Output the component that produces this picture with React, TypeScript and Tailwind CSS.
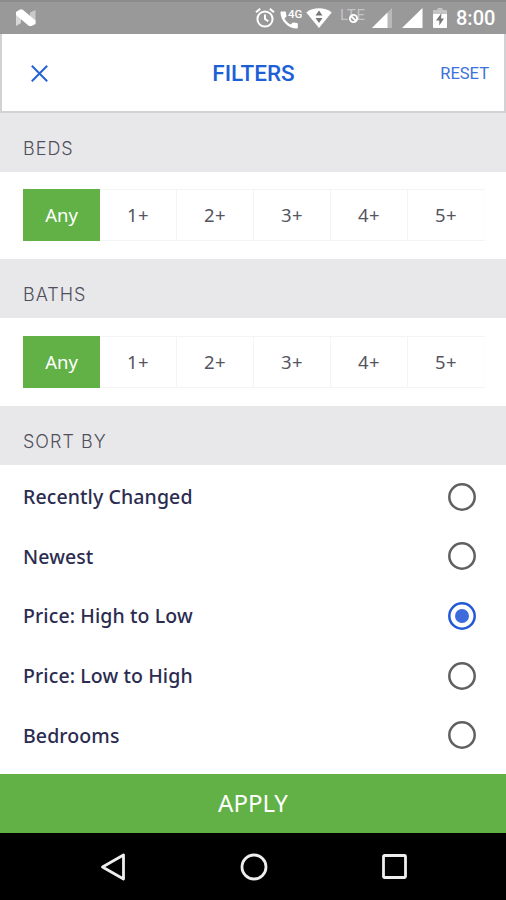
import { useState } from "react";

const counts = ["Any", "1+", "2+", "3+", "4+", "5+"];

const sortOptions = [
  "Recently Changed",
  "Newest",
  "Price: High to Low",
  "Price: Low to High",
  "Bedrooms",
];

function StatusBar() {
  return (
    <div className="flex h-[34px] items-center border-t-2 border-[#8b8b8b] bg-[#999999] pl-[15px] pr-[11px] text-white">
      <svg width="22" height="18" viewBox="0 0 22 18">
        <path d="M1 4 6 1v13L1 17z" fill="#d6d6d6" />
        <path d="M15 3.500 20.500 1v13L15 16z" fill="#c9c9c9" />
        <path d="M1 3 5 .500h2.500L20.500 11.500V15L16.500 17H14L1 6z" fill="#fff" />
      </svg>

      <svg className="ml-auto" width="20" height="22" viewBox="0 0 20 22" fill="none" stroke="#fff" strokeWidth="2">
        <circle cx="10" cy="12" r="7.600" />
        <path d="M10 7.500V12l3.300 2.300M1 5.300l4.200-3.600M19 5.300l-4.200-3.600" />
      </svg>

      <svg className="ml-[5px]" width="22" height="26" viewBox="0 -2 22 26">
        <path
          d="M1.500 4.500h3.500c.6 0 1 .4 1 1 0 1.200.2 2.300.5 3.300.1.400 0 .8-.3 1L4.500 11.500c1.500 2.800 3.500 4.700 6.300 6.100l1.800-1.800c.3-.3.700-.4 1-.2 1 .3 2.100.5 3.200.5.600 0 1 .4 1 1v3.400c0 .6-.4 1-1 1C8.300 21.500.5 13.800.5 5.500c0-.6.400-1 1-1z"
          fill="#fff"
        />
        <text x="8" y="10.500" fill="#fff" fontSize="11.500" fontWeight="500" fontFamily="Roboto, sans-serif">
          4G
        </text>
      </svg>

      <svg className="ml-[4px]" width="26" height="20" viewBox="0 0 26 20">
        <path d="M13 20 .3 4.400C3.700 1.700 8.200.3 13 .3s9.300 1.400 12.700 4.100z" fill="#fff" />
        <path d="m13 2.500 3.500 5H9.500zM13 15l3.500-5H9.500z" fill="#777" />
      </svg>

      <svg className="ml-[8px]" width="27" height="26" viewBox="0 -2 27 26">
        <text x="0" y="13" fill="#c4c4c4" fontSize="15" fontFamily="Roboto, sans-serif" textLength="25">
          LTE
        </text>
        <circle cx="13.500" cy="11.500" r="3.600" fill="#999" stroke="#fff" strokeWidth="1.900" />
        <path d="m11 9 5 5" stroke="#fff" strokeWidth="1.800" />
      </svg>

      <svg className="ml-[5px]" width="21" height="20" viewBox="0 0 21 20">
        <path d="M0 20 20 0v20z" fill="#b9b9b9" />
        <path d="M0 20 15.500 4.500V20z" fill="#fff" />
      </svg>

      <svg className="ml-[9px]" width="21" height="20" viewBox="0 0 21 20">
        <path d="M0 20 20.500 0v20z" fill="#fff" />
      </svg>

      <svg className="ml-[10px]" width="14" height="20" viewBox="0 0 14 20">
        <path d="M4.500 0h5v2H13c.6 0 1 .4 1 1v4H0V3c0-.6.4-1 1-1h3.500z" fill="#c4c4c4" />
        <path d="M0 6h14v13c0 .6-.4 1-1 1H1c-.6 0-1-.4-1-1z" fill="#fff" />
        <path d="M8.500 5 3 12.500h3.300V17.500L11 10.500H8z" fill="#777" />
      </svg>

      <span className="ml-[9px] w-[39px] whitespace-nowrap font-[Roboto,sans-serif] text-[20px] font-medium leading-none">
        8:00
      </span>
    </div>
  );
}

type SectionTitleProps = {
  title: string;
};

function SectionTitle({ title }: SectionTitleProps) {
  return (
    <h2 className="flex h-[59px] items-center bg-[#e8e8ea] pl-[23px] pt-[11px] font-[Inter,sans-serif] text-[18px] font-light tracking-[1px] text-[#50505c]">
      {title}
    </h2>
  );
}

type CountPickerProps = {
  value: string;
  onChange: (value: string) => void;
  className?: string;
};

function CountPicker({ value, onChange, className = "h-[88px]" }: CountPickerProps) {
  return (
    <div className={`flex items-center pl-[23px] pr-[21px] ${className}`}>
      <div className="grid h-[52px] w-full grid-cols-6">
        {counts.map((count) => (
          <button
            key={count}
            type="button"
            onClick={() => onChange(count)}
            className={
              value === count
                ? "bg-[#61b146] text-[18.5px] text-white"
                : "border-y border-r border-[#f4f4f4] text-[18.5px] tracking-[0.4px] text-[#55555f] last:border-r-[#fcfcfc]"
            }
          >
            {count}
          </button>
        ))}
      </div>
    </div>
  );
}

export default function App() {
  const [beds, setBeds] = useState("Any");
  const [baths, setBaths] = useState("Any");
  const [sort, setSort] = useState("Price: High to Low");

  return (
    <div className="flex h-[900px] w-[506px] flex-col overflow-hidden bg-white font-['Noto_Sans',sans-serif]">
      <StatusBar />

      <header className="grid h-[79px] grid-cols-3 items-center border-x-2 border-b-2 border-[#d2d2d4] pl-[29px] pr-[15px] pt-[2px]">
        <svg width="17" height="17" viewBox="0 0 17 17" stroke="#2363d4" strokeWidth="2">
          <path d="m.8.800 15.400 15.400M16.200.800.8 16.200" />
        </svg>
        <h1 className="-ml-[13px] text-center font-[Roboto,sans-serif] text-[22.5px] font-medium text-[#1c5fd6]">
          FILTERS
        </h1>
        <button type="button" className="pt-px text-right font-[Roboto,sans-serif] text-[16.5px] text-[#3b72dc]">
          RESET
        </button>
      </header>

      <SectionTitle title="BEDS" />
      <CountPicker value={beds} onChange={setBeds} className="h-[87px] pb-[2px]" />
      <SectionTitle title="BATHS" />
      <CountPicker value={baths} onChange={setBaths} />
      <SectionTitle title="SORT BY" />

      <div className="flex flex-1 flex-col pt-[2px] pb-[9px]">
        {sortOptions.map((option) => (
          <button
            key={option}
            type="button"
            onClick={() => setSort(option)}
            className="flex flex-1 items-center justify-between pl-[23px] pr-[30px] text-[19.5px] font-medium tracking-[0.1px] text-[#2b2c50]"
          >
            {option}
            <svg width="28" height="28" viewBox="0 0 28 28" fill="none">
              <circle
                cx="14"
                cy="14"
                r="12.700"
                stroke={sort === option ? "#2459d6" : "#606060"}
                strokeWidth="2.500"
              />
              {sort === option && <circle cx="14" cy="14" r="7" fill="#3d6bdc" />}
            </svg>
          </button>
        ))}
      </div>

      <button type="button" className="h-[59px] shrink-0 bg-[#61b146] pb-px text-[24px] text-white">
        APPLY
      </button>

      <nav className="flex h-[67px] shrink-0 items-center justify-between bg-black pl-[100px] pr-[99px]">
        <svg width="26" height="28" viewBox="0 0 26 28" fill="none" stroke="#eee" strokeWidth="2.800" strokeLinejoin="round">
          <path d="M23.500 2v24L2.500 14z" />
        </svg>
        <svg width="28" height="28" viewBox="0 0 28 28" fill="none" stroke="#eee" strokeWidth="2.800">
          <circle cx="14" cy="14" r="12" />
        </svg>
        <svg width="25" height="25" viewBox="0 0 25 25" fill="none" stroke="#eee" strokeWidth="2.800">
          <rect x="1.500" y="1.500" width="22" height="22" rx="1" />
        </svg>
      </nav>
    </div>
  );
}
